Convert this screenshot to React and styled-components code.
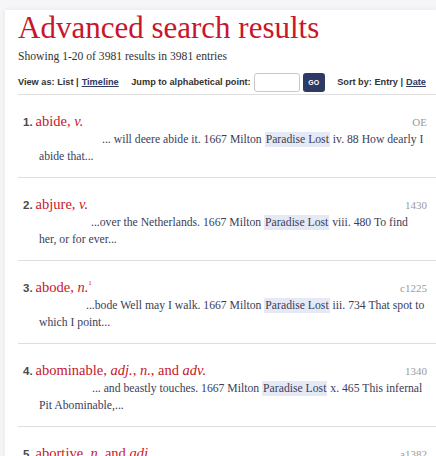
import React from "react";
import styled, { createGlobalStyle } from "styled-components";

const GlobalStyle = createGlobalStyle`
  html, body {
    margin: 0;
    padding: 0;
    background: #f6f6f8;
  }
  body {
    font-family: "Liberation Serif", "Times New Roman", serif;
  }
`;

const RED = "#c8162b";
const INK = "#3b4058";
const NAVY = "#2c3a64";

const Page = styled.div`
  margin: 10px 0 0 5px;
  background: #ffffff;
  box-shadow: 0 0 6px rgba(0, 0, 0, 0.07);
  padding-left: 13px;
  min-height: 460px;
`;

const Title = styled.h1`
  margin: 0;
  font-family: "Liberation Serif", "Times New Roman", serif;
  font-weight: normal;
  font-size: 31px;
  line-height: 36px;
  color: ${RED};
`;

const Summary = styled.p`
  margin: 3px 0 0;
  font-size: 11.6px;
  line-height: 16px;
  color: #333;
`;

const Toolbar = styled.div`
  display: flex;
  align-items: center;
  justify-content: space-between;
  margin-top: 7px;
  padding: 1px 10px 2px 0;
  border-bottom: 1px solid #dedede;
  font-family: "Liberation Sans", Arial, sans-serif;
  font-size: 9.2px;
  line-height: 11px;
  font-weight: bold;
  color: #333;
  white-space: nowrap;
`;

const Group = styled.div`
  display: flex;
  align-items: center;
  gap: 3px;
`;

const Link = styled.a`
  color: ${NAVY};
  text-decoration: underline;
  cursor: pointer;
`;

const JumpInput = styled.input`
  box-sizing: border-box;
  width: 46px;
  height: 19px;
  border: 1px solid #c9c9c9;
  border-radius: 3px;
  background: #fff;
`;

const GoButton = styled.button`
  box-sizing: border-box;
  height: 19px;
  width: 22px;
  padding: 0;
  border: none;
  border-radius: 3px;
  background: ${NAVY};
  color: #fff;
  font-family: "Liberation Sans", Arial, sans-serif;
  font-size: 7px;
  font-weight: bold;
`;

const Entry = styled.div`
  padding: 16px 9px 12px 0;
  border-bottom: 1px solid #dedede;
`;

const Head = styled.div`
  display: flex;
  align-items: baseline;
  justify-content: space-between;
  padding-left: 5px;
  line-height: 20px;
`;

const Num = styled.span`
  font-family: "Liberation Sans", Arial, sans-serif;
  font-size: 11.5px;
  font-weight: bold;
  color: #4a4a4a;
  margin-right: 3px;
`;

const Headword = styled.span`
  font-size: 14.5px;
  color: ${RED};
  i {
    font-style: italic;
  }
  sup {
    font-size: 7px;
    line-height: 0;
    vertical-align: 7px;
  }
`;

const DateLabel = styled.span`
  font-size: 11px;
  color: #9a9a9a;
`;

const Snippet = styled.p`
  margin: 0;
  padding-left: 21px;
  text-indent: ${(p) => p.$indent}px;
  font-size: 11.7px;
  line-height: 16.5px;
  color: ${INK};
`;

const Mark = styled.span`
  background: #e4e9f5;
  padding: 1px 1px;
`;

const results = [
  {
    n: 1,
    word: (
      <>
        abide, <i>v.</i>
      </>
    ),
    date: "OE",
    indent: 63,
    before: "... will deere abide it. 1667 Milton ",
    after: " iv. 88 How dearly I abide that...",
  },
  {
    n: 2,
    word: (
      <>
        abjure, <i>v.</i>
      </>
    ),
    date: "1430",
    indent: 52,
    before: "...over the Netherlands. 1667 Milton ",
    after: " viii. 480 To find her, or for ever...",
  },
  {
    n: 3,
    word: (
      <>
        abode, <i>n.</i>
        <sup>1</sup>
      </>
    ),
    date: "c1225",
    indent: 47,
    before: "...bode Well may I walk. 1667 Milton ",
    after: " iii. 734 That spot to which I point...",
  },
  {
    n: 4,
    word: (
      <>
        abominable, <i>adj.</i>, <i>n.</i>, and <i>adv.</i>
      </>
    ),
    date: "1340",
    indent: 53,
    before: "... and beastly touches. 1667 Milton ",
    after: " x. 465 This infernal Pit Abominable,...",
  },
  {
    n: 5,
    word: (
      <>
        abortive, <i>n.</i> and <i>adj.</i>
      </>
    ),
    date: "a1382",
    indent: 50,
    before: "...that abortive gulf. 1667 Milton ",
    after: " ii. 441 The void profound Of unessential Night...",
  },
];

export default function App() {
  return (
    <>
      <GlobalStyle />
      <Page>
        <Title>Advanced search results</Title>
        <Summary>Showing 1-20 of 3981 results in 3981 entries</Summary>
        <Toolbar>
          <Group>
            <span>View as: List |</span>
            <Link>Timeline</Link>
          </Group>
          <Group>
            <span>Jump to alphabetical point:</span>
            <JumpInput />
            <GoButton>GO</GoButton>
          </Group>
          <Group>
            <span>Sort by: Entry |</span>
            <Link>Date</Link>
          </Group>
        </Toolbar>
        {results.map((r) => (
          <Entry key={r.n}>
            <Head>
              <div>
                <Num>{r.n}.</Num>
                <Headword>{r.word}</Headword>
              </div>
              <DateLabel>{r.date}</DateLabel>
            </Head>
            <Snippet $indent={r.indent}>
              {r.before}
              <Mark>Paradise Lost</Mark>
              {r.after}
            </Snippet>
          </Entry>
        ))}
      </Page>
    </>
  );
}
